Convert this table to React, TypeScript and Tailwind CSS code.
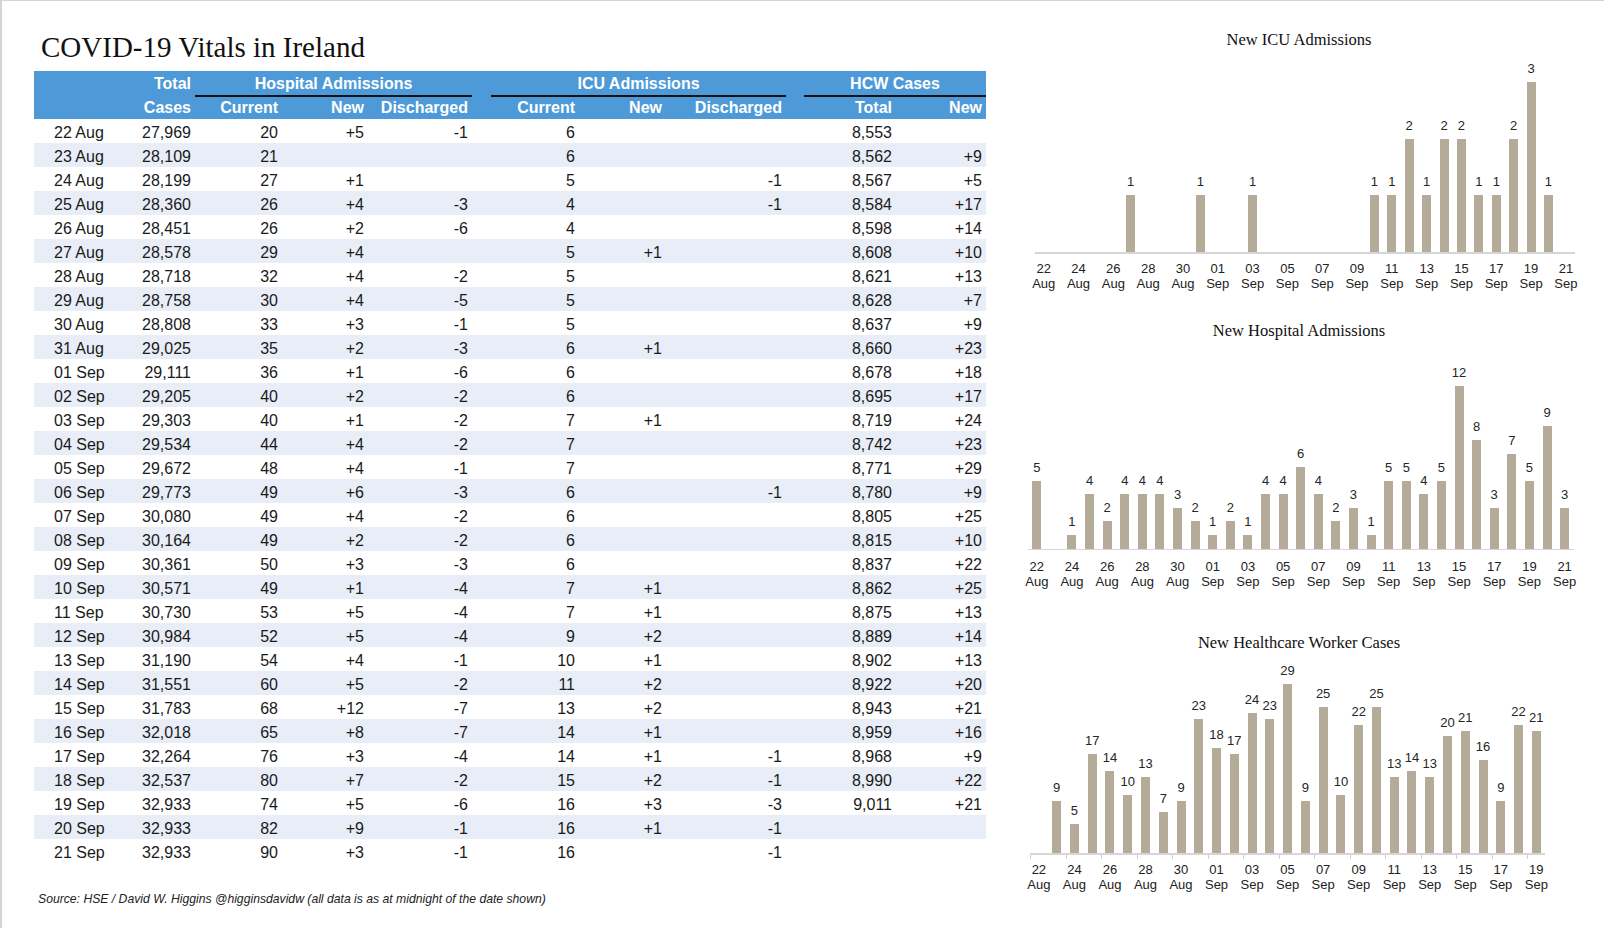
const rows: string[][] = [
  ["22 Aug", "27,969", "20", "+5", "-1", "6", "", "", "8,553", ""],
  ["23 Aug", "28,109", "21", "", "", "6", "", "", "8,562", "+9"],
  ["24 Aug", "28,199", "27", "+1", "", "5", "", "-1", "8,567", "+5"],
  ["25 Aug", "28,360", "26", "+4", "-3", "4", "", "-1", "8,584", "+17"],
  ["26 Aug", "28,451", "26", "+2", "-6", "4", "", "", "8,598", "+14"],
  ["27 Aug", "28,578", "29", "+4", "", "5", "+1", "", "8,608", "+10"],
  ["28 Aug", "28,718", "32", "+4", "-2", "5", "", "", "8,621", "+13"],
  ["29 Aug", "28,758", "30", "+4", "-5", "5", "", "", "8,628", "+7"],
  ["30 Aug", "28,808", "33", "+3", "-1", "5", "", "", "8,637", "+9"],
  ["31 Aug", "29,025", "35", "+2", "-3", "6", "+1", "", "8,660", "+23"],
  ["01 Sep", "29,111", "36", "+1", "-6", "6", "", "", "8,678", "+18"],
  ["02 Sep", "29,205", "40", "+2", "-2", "6", "", "", "8,695", "+17"],
  ["03 Sep", "29,303", "40", "+1", "-2", "7", "+1", "", "8,719", "+24"],
  ["04 Sep", "29,534", "44", "+4", "-2", "7", "", "", "8,742", "+23"],
  ["05 Sep", "29,672", "48", "+4", "-1", "7", "", "", "8,771", "+29"],
  ["06 Sep", "29,773", "49", "+6", "-3", "6", "", "-1", "8,780", "+9"],
  ["07 Sep", "30,080", "49", "+4", "-2", "6", "", "", "8,805", "+25"],
  ["08 Sep", "30,164", "49", "+2", "-2", "6", "", "", "8,815", "+10"],
  ["09 Sep", "30,361", "50", "+3", "-3", "6", "", "", "8,837", "+22"],
  ["10 Sep", "30,571", "49", "+1", "-4", "7", "+1", "", "8,862", "+25"],
  ["11 Sep", "30,730", "53", "+5", "-4", "7", "+1", "", "8,875", "+13"],
  ["12 Sep", "30,984", "52", "+5", "-4", "9", "+2", "", "8,889", "+14"],
  ["13 Sep", "31,190", "54", "+4", "-1", "10", "+1", "", "8,902", "+13"],
  ["14 Sep", "31,551", "60", "+5", "-2", "11", "+2", "", "8,922", "+20"],
  ["15 Sep", "31,783", "68", "+12", "-7", "13", "+2", "", "8,943", "+21"],
  ["16 Sep", "32,018", "65", "+8", "-7", "14", "+1", "", "8,959", "+16"],
  ["17 Sep", "32,264", "76", "+3", "-4", "14", "+1", "-1", "8,968", "+9"],
  ["18 Sep", "32,537", "80", "+7", "-2", "15", "+2", "-1", "8,990", "+22"],
  ["19 Sep", "32,933", "74", "+5", "-6", "16", "+3", "-3", "9,011", "+21"],
  ["20 Sep", "32,933", "82", "+9", "-1", "16", "+1", "-1", "", ""],
  ["21 Sep", "32,933", "90", "+3", "-1", "16", "", "-1", "", ""],
];

const num = (s: string) => parseInt(s, 10) || 0;
const icu = rows.map((r) => num(r[6]));
const hosp = rows.map((r) => num(r[3]));
const hcw = rows.slice(0, 29).map((r) => num(r[9]));

const grid =
  "grid grid-cols-[76px_85px_87px_86px_104px_107px_87px_120px_110px_90px]";

function dayLabel(i: number) {
  const d = 22 + i;
  if (d <= 31) return [String(d), "Aug"];
  return [String(d - 31).padStart(2, "0"), "Sep"];
}

type ChartProps = {
  title: string;
  values: number[];
  cat: number;
  unit: number;
  plotH: number;
  offset: number;
  labelsClass: string;
  ticks?: boolean;
  className: string;
};

function BarChart({ title, values, cat, unit, plotH, offset, labelsClass, ticks, className }: ChartProps) {
  return (
    <div className={className}>
      <div className="h-[20px] text-center font-['Liberation_Serif',serif] text-[16.5px] leading-[20px] text-[#111]">
        {title}
      </div>
      <div style={{ marginLeft: offset, width: cat * values.length }}>
        {/* bars */}
        <div className="flex items-end" style={{ height: plotH }}>
          {values.map((v, i) => (
            <div key={i} className="flex flex-col items-center justify-end" style={{ width: cat }}>
              {v > 0 && (
                <>
                  <span className="mb-[6px] whitespace-nowrap text-[13px] leading-[14px] text-[#262626]">{v}</span>
                  <div className="w-[9px] bg-[#b4ab99]" style={{ height: v * unit }} />
                </>
              )}
            </div>
          ))}
        </div>
        <div className="h-[1.5px] bg-[#d6d6d6]" />
        {ticks && (
          <div className="flex h-[4px]">
            {values.map((_, i) => (
              <div
                key={i}
                className={i % 2 === 0 ? "h-full border-l border-[#cfcfcf]" : "h-full"}
                style={{ width: cat }}
              />
            ))}
          </div>
        )}
        {/* axis labels */}
        <div className={`flex ${labelsClass}`}>
          {values.map((_, i) => (
            <div key={i} className="flex flex-col items-center" style={{ width: cat }}>
              {i % 2 === 0 &&
                dayLabel(i).map((t) => (
                  <span key={t} className="whitespace-nowrap text-[13px] leading-[15px] text-[#222]">
                    {t}
                  </span>
                ))}
            </div>
          ))}
        </div>
      </div>
    </div>
  );
}

export default function App() {
  return (
    <div className="flex h-[928px] w-[1604px] overflow-hidden border-l-2 border-t border-[#d4d4d4] bg-white font-['Liberation_Sans',Arial,sans-serif] text-[#1a1a1a]">
      {/* table side */}
      <div className="w-[952px] ml-[32px] flex-none">
        <h1 className="mt-[32px] h-[29px] pl-[7px] font-['Liberation_Serif',serif] text-[29px] leading-[29px] font-normal text-[#111]">
          COVID-19 Vitals in Ireland
        </h1>

        <div className="mt-[9px] h-[48px] bg-[#4e9ad8] text-[16px] font-bold text-white">
          <div className={`${grid} h-[24px] leading-[22px] pt-[2px]`}>
            <div />
            <div className="pr-[4px] text-right">Total</div>
            <div className="col-span-3 text-center">Hospital Admissions</div>
            <div className="col-span-3 pl-[19px] text-center">ICU Admissions</div>
            <div className="col-span-2 pl-[18px] text-center">HCW Cases</div>
          </div>
          <div className={grid}>
            <div />
            <div />
            <div className="col-span-3 h-[1.5px] bg-[#111]" />
            <div className="col-span-3 pl-[19px]">
              <div className="h-[1.5px] bg-[#111]" />
            </div>
            <div className="col-span-2 pl-[18px]">
              <div className="h-[1.5px] bg-[#111]" />
            </div>
          </div>
          <div className={`${grid} leading-[22px]`}>
            <div />
            <div className="pr-[4px] text-right">Cases</div>
            <div className="pr-[4px] text-right">Current</div>
            <div className="pr-[4px] text-right">New</div>
            <div className="pr-[4px] text-right">Discharged</div>
            <div className="pr-[4px] text-right">Current</div>
            <div className="pr-[4px] text-right">New</div>
            <div className="pr-[4px] text-right">Discharged</div>
            <div className="pr-[4px] text-right">Total</div>
            <div className="pr-[4px] text-right">New</div>
          </div>
        </div>

        <div className="text-[16px]">
          {rows.map((r, i) => (
            <div
              key={r[0]}
              className={`${grid} h-[24px] pt-[3px] leading-[21px] ${i % 2 === 1 ? "bg-[#e9edf7]" : "bg-white"}`}
            >
              <div className="pl-[20px]">{r[0]}</div>
              {r.slice(1).map((c, j) => (
                <div key={j} className="pr-[4px] text-right">
                  {c}
                </div>
              ))}
            </div>
          ))}
        </div>

        <p className="mt-[29px] ml-[4px] text-[12.2px] italic leading-[14px] text-[#222]">
          Source: HSE / David W. Higgins @higginsdavidw (all data is as at midnight of the date shown)
        </p>
      </div>

      {/* charts side */}
      <div className="ml-[19px] w-[588px] flex-none">
        <BarChart
          className="mt-[29px]"
          title="New ICU Admissions"
          values={icu}
          cat={17.42}
          unit={56.7}
          plotH={202}
          offset={30}
          labelsClass="mt-[7px]"
        />
        <BarChart
          className="mt-[30px]"
          title="New Hospital Admissions"
          values={hosp}
          cat={17.6}
          unit={13.57}
          plotH={208}
          offset={23}
          labelsClass="mt-[9px]"
        />
        <BarChart
          className="mt-[44px]"
          title="New Healthcare Worker Cases"
          values={hcw}
          cat={17.77}
          unit={5.83}
          plotH={200}
          offset={25}
          labelsClass="mt-[3px]"
          ticks
        />
      </div>
    </div>
  );
}
